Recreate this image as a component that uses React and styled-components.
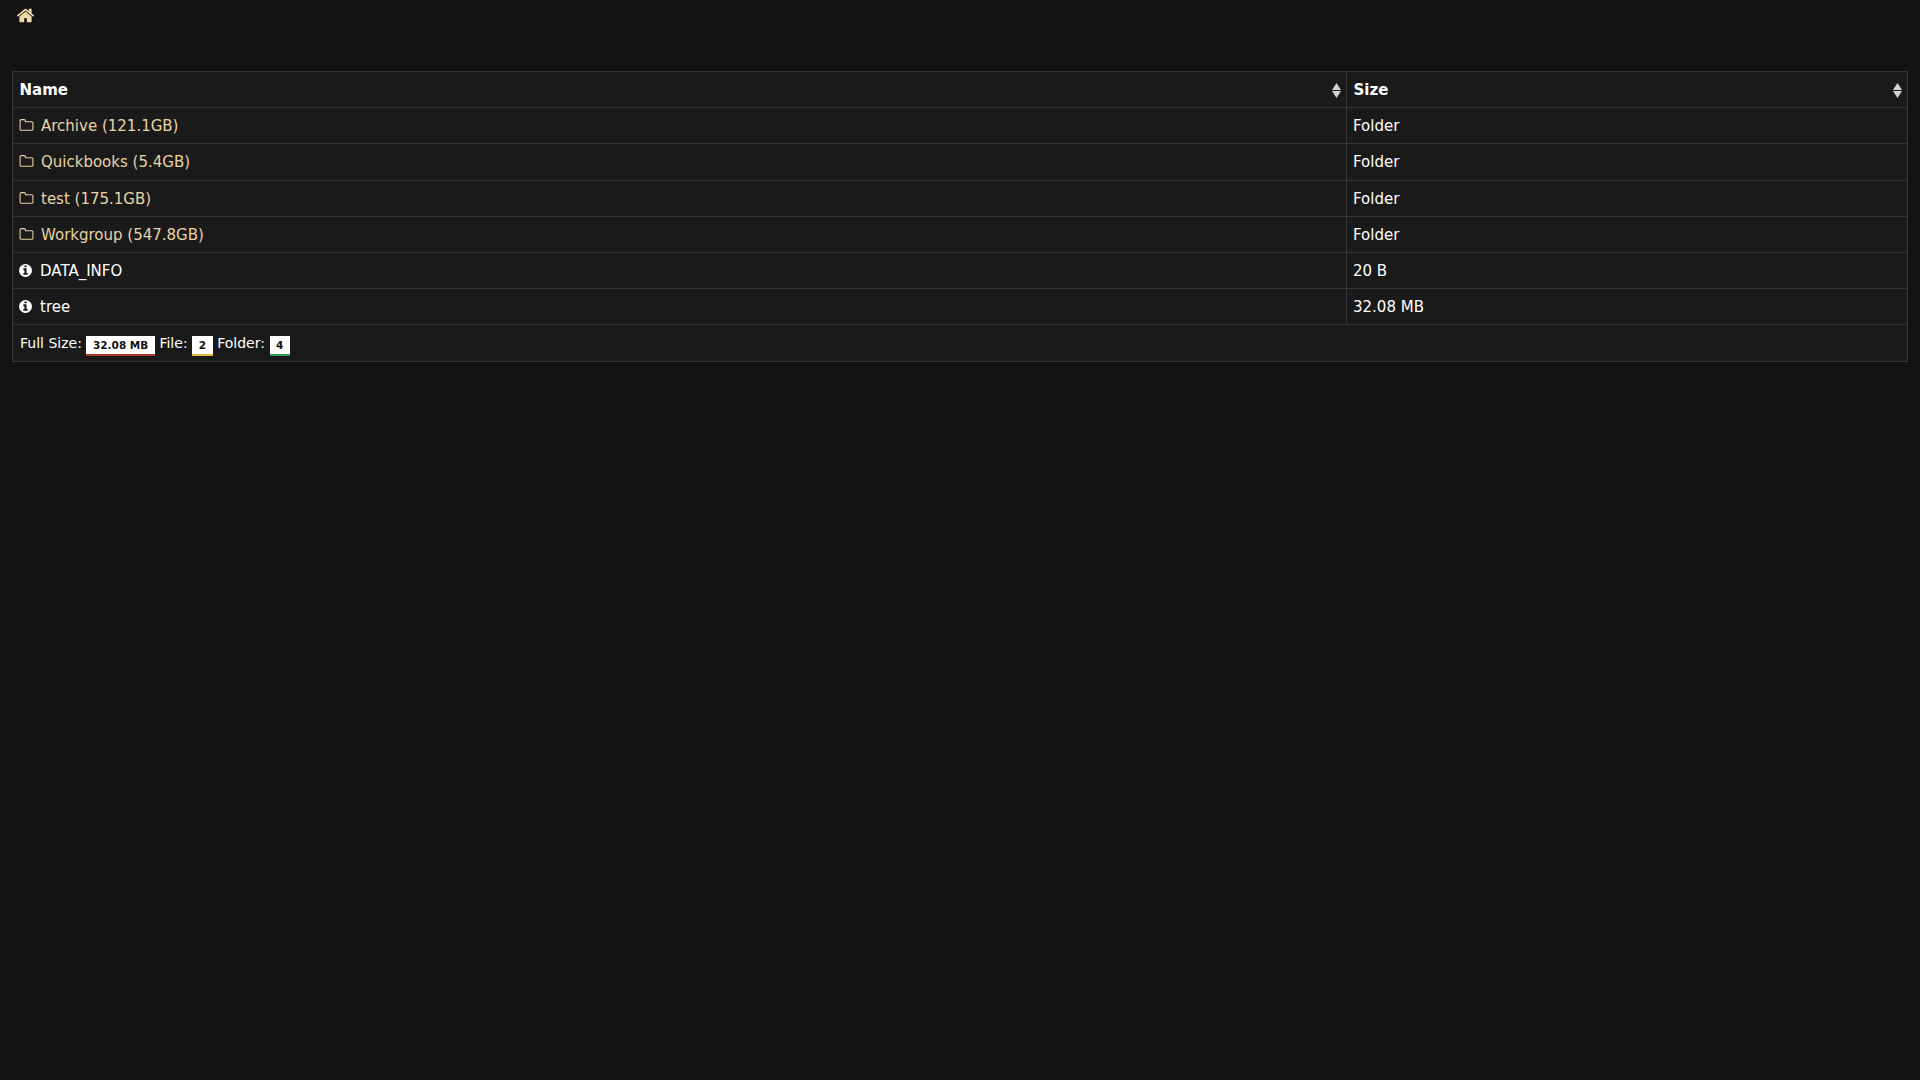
import React from 'react'
import styled, { createGlobalStyle } from 'styled-components'

const GlobalStyle = createGlobalStyle`
html, body {
  margin: 0;
  padding: 0;
  background: #121212;
  min-height: 100%;
}
body {
  font-family: "DejaVu Sans", sans-serif;
  font-size: 15px;
  color: #fff;
}
`
const TopBar = styled.nav`
height: 24px;
background: #141414;
display: flex;
align-items: center;
padding: 5px 0 0 16px;
color: #f0d9a8;
`
const Content = styled.main`
padding: 42px 12px 0;
`
const Table = styled.table`
width: 100%;
table-layout: fixed;
border-collapse: collapse;
background: #1a1a1a;
`
const Th = styled.th`
position: relative;
border: 1px solid #353535;
padding: 10px 6px 8px 6.5px;
line-height: 17.2px;
text-align: left;
font-weight: bold;
width: ${props => props.$width || 'auto'};
`
const SortMark = styled.svg`
position: absolute;
right: 5px;
top: 11px;
width: 9px;
height: 15px;
fill: #d4d4d4;
`
const Td = styled.td`
border: 1px solid #353535;
padding: 10px 6px 8px;
line-height: 17.2px;
`
const FolderLink = styled.a`
color: #e8d4a6;
text-decoration: none;
`
const FileLink = styled.a`
color: #fff;
text-decoration: none;
`
const Icon = styled.svg`
width: ${props => props.$size}px;
height: ${props => props.$size}px;
fill: currentColor;
vertical-align: -2px;
margin-top: -4px;
margin-left: ${props => props.$shift || 0}px;
margin-right: ${props => props.$gap}px;
`
const FooterCell = styled(Td)`
font-size: 14px;
padding: 10px 6px 8px 7px;
`
const Badge = styled.span`
display: inline-block;
background: #fff;
color: #111;
font-size: 10.5px;
line-height: 15px;
font-weight: bold;
padding: 2.5px 6.5px 0.5px;
margin: -6px 0.2px;
vertical-align: -1px;
border-bottom: 2px solid ${props => props.$color};
`

const homePath = 'M1472 992v480q0 26-19 45t-45 19h-384v-384h-256v384h-384q-26 0-45-19t-19-45v-480q0-1 .5-3t.5-3l575-474 575 474q1 2 1 6zm223-69l-62 74q-8 9-21 11h-3q-13 0-21-7l-692-577-692 577q-12 8-24 7-13-2-21-11l-62-74q-8-10-7-23.5t11-21.5l719-599q32-26 76-26t76 26l244 204v-195q0-14 9-23t23-9h192q14 0 23 9t9 23v408l219 182q10 8 11 21.5t-7 23.5z'
const folderPath = 'M1600 1312v-704q0-40-28-68t-68-28h-704q-40 0-68-28t-28-68v-64q0-40-28-68t-68-28h-320q-40 0-68 28t-28 68v960q0 40 28 68t68 28h1216q40 0 68-28t28-68zm128-704v704q0 92-66 158t-158 66h-1216q-92 0-158-66t-66-158v-960q0-92 66-158t158-66h320q92 0 158 66t66 158v32h672q92 0 158 66t66 158z'
const infoPath = 'M1152 1376v-160q0-14-9-23t-23-9h-96v-512q0-14-9-23t-23-9h-320q-14 0-23 9t-9 23v160q0 14 9 23t23 9h96v320h-96q-14 0-23 9t-9 23v160q0 14 9 23t23 9h448q14 0 23-9t9-23zm-128-896v-160q0-14-9-23t-23-9h-192q-14 0-23 9t-9 23v160q0 14 9 23t23 9h192q14 0 23-9t9-23zm640 416q0 209-103 385.5t-279.5 279.5-385.5 103-385.5-103-279.5-279.5-103-385.5 103-385.5 279.5-279.5 385.5-103 385.5 103 279.5 279.5 103 385.5z'

function Glyph ({ path, size, gap, shift }) {
  return <Icon viewBox='0 0 1792 1792' $size={size} $gap={gap} $shift={shift}><path d={path} /></Icon>
}

function Sort () {
  return (
    <SortMark viewBox='0 0 9 15'>
      <polygon points='4.5,0 9,7 0,7' />
      <polygon points='0,8 9,8 4.5,15' />
    </SortMark>
  )
}

const folders = ['Archive (121.1GB)', 'Quickbooks (5.4GB)', 'test (175.1GB)', 'Workgroup (547.8GB)']
const files = [
  { name: 'DATA_INFO', size: '20 B' },
  { name: 'tree', size: '32.08 MB' }
]

function App () {
  return (
    <>
      <GlobalStyle />
      <TopBar><Glyph path={homePath} size={19} gap={0} /></TopBar>
      <Content>
        <Table>
          <thead>
            <tr>
              <Th $width='1320.5px'>Name<Sort /></Th>
              <Th>Size<Sort /></Th>
            </tr>
          </thead>
          <tbody>
            {folders.map(name => (
              <tr key={name}>
                <Td><FolderLink><Glyph path={folderPath} size={15} gap={7} />{name}</FolderLink></Td>
                <Td>Folder</Td>
              </tr>
            ))}
            {files.map(file => (
              <tr key={file.name}>
                <Td><FileLink><Glyph path={infoPath} size={15} gap={7} shift={-1} />{file.name}</FileLink></Td>
                <Td>{file.size}</Td>
              </tr>
            ))}
          </tbody>
          <tfoot>
            <tr>
              <FooterCell colSpan={2}>
                Full Size: <Badge $color='#a83a2c'>32.08 MB</Badge> File: <Badge $color='#e0b83c'>2</Badge> Folder: <Badge $color='#2a9d5c'>4</Badge>
              </FooterCell>
            </tr>
          </tfoot>
        </Table>
      </Content>
    </>
  )
}
export default App
